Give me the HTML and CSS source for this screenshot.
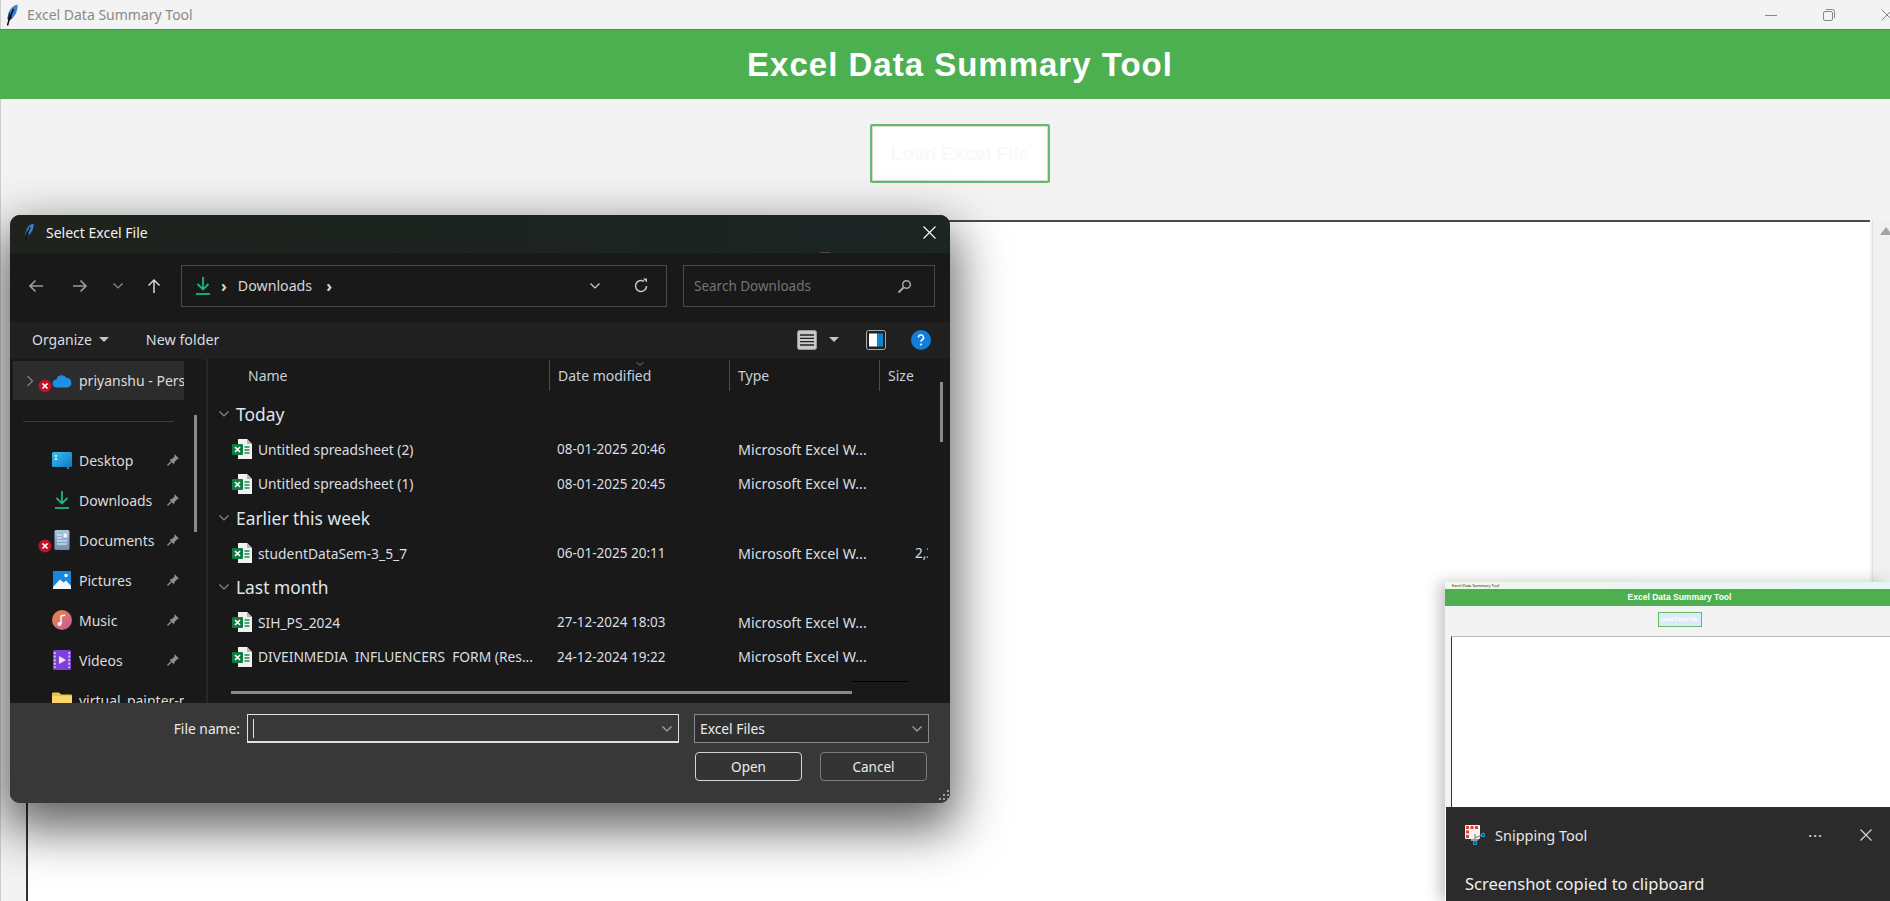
FILE: index.html
```html
<!doctype html>
<html>
<head>
  <meta charset="utf-8">
  <title>Excel Data Summary Tool</title>
  <link rel="stylesheet" href="styles.css">
</head>
<body>

  <svg class="sprite" aria-hidden="true">
    <defs>
      <linearGradient id="g-desktop" x1="0" y1="0" x2="1" y2="1"><stop offset="0" stop-color="#36c5ec"/><stop offset="1" stop-color="#1173c9"/></linearGradient>
      <linearGradient id="g-music" x1="0" y1="0" x2="1" y2="1"><stop offset="0" stop-color="#f0883e"/><stop offset="1" stop-color="#c4589e"/></linearGradient>
      <linearGradient id="g-doc" x1="0" y1="0" x2="0" y2="1"><stop offset="0" stop-color="#a9c4dd"/><stop offset="1" stop-color="#6d8fb3"/></linearGradient>
    </defs>
    <symbol id="feather" viewBox="0 0 12 22">
      <path d="M11.500 0.500C5 2 1.500 8 1.500 15l2 1.500C9 13 12 7 11.500 0.500z" fill="#3f7fd0"/>
      <path d="M1.500 15l2 1.500L6 14 3.500 8z" fill="#1d2c45"/>
      <path d="M7.500 5L3 16l-1.500 5.500" fill="none" stroke="#0c0c0c" stroke-width="1.500"/>
    </symbol>
    <symbol id="xlsx" viewBox="0 0 20 20">
      <path d="M6 0h9l5 5v15H6z" fill="#f1f1f1"/>
      <path d="M15 0v5h5z" fill="#b5b5b5"/>
      <path d="M12.500 8h5M12.500 11h5M12.500 14h5" stroke="#1e8a52" stroke-width="1.500"/>
      <rect x="0" y="5" width="11" height="11" rx="1" fill="#107c41"/>
      <path d="M3 8l5 5M8 8l-5 5" stroke="#fff" stroke-width="1.600"/>
    </symbol>
    <symbol id="pin" viewBox="0 0 14 14">
      <path d="M8.500 1l4.500 4.500-1.800.8-2.700 2.700-.5 2.500L3.500 6.500 6 6l2.700-2.700z" fill="#8e8e8e"/>
      <path d="M5.500 8.500L1.500 12.500" stroke="#8e8e8e" stroke-width="1.500"/>
    </symbol>
    <symbol id="download" viewBox="0 0 16 20">
      <path d="M8 1v12M2.500 8L8 13.500 13.500 8" fill="none" stroke="#1cb48a" stroke-width="1.800"/>
      <path d="M1 18h14" stroke="#1cb48a" stroke-width="1.800"/>
    </symbol>
    <symbol id="badge" viewBox="0 0 14 14">
      <circle cx="7" cy="7" r="6.500" fill="#c4102a"/>
      <path d="M4.500 4.500l5 5M9.500 4.500l-5 5" stroke="#fff" stroke-width="1.700"/>
    </symbol>
    <symbol id="chev-down" viewBox="0 0 12 8">
      <path d="M1.500 1.500L6 6l4.500-4.500" fill="none" stroke="currentColor" stroke-width="1.200"/>
    </symbol>
  </svg>

  <div class="app">
    <div class="titlebar">
      <svg class="title-feather"><use href="#feather"/></svg>
      <span class="title-text">Excel Data Summary Tool</span>
      <div class="win-controls">
        <svg width="12" height="12" viewBox="0 0 12 12"><path d="M0 6.500h12" stroke="#888" stroke-width="1"/></svg>
        <svg width="12" height="12" viewBox="0 0 12 12"><rect x="0.500" y="2.500" width="9" height="9" rx="1.500" fill="none" stroke="#888"/><path d="M3 .5h6.500a2 2 0 0 1 2 2V9" fill="none" stroke="#888"/></svg>
        <svg width="12" height="12" viewBox="0 0 12 12"><path d="M0.500 .5l11 11M11.500 .5l-11 11" stroke="#888"/></svg>
      </div>
    </div>
    <header class="app-header"><h1>Excel Data Summary Tool</h1></header>
    <div class="load-row"><button class="load-btn">Load Excel File</button></div>
    <div class="canvas-row">
      <div class="canvas"></div>
      <div class="vscroll"><svg width="12" height="8" viewBox="0 0 12 8"><path d="M6 0l6 8H0z" fill="#a3a3a3"/></svg></div>
    </div>
  </div>

  <section class="dialog">
    <div class="dlg-title">
      <svg class="dlg-feather"><use href="#feather"/></svg>
      <span>Select Excel File</span>
      <svg class="dlg-close" width="13" height="13" viewBox="0 0 13 13"><path d="M.5.5l12 12M12.500.5l-12 12" stroke="#fff" stroke-width="1.100"/></svg>
    </div>

    <div class="dlg-nav">
      <button class="nav-btn nav-back"><svg width="16" height="14" viewBox="0 0 16 14"><path d="M15 7H2M7.500 1.500L2 7l5.500 5.500" fill="none" stroke="#9a9a9a" stroke-width="1.700"/></svg></button>
      <button class="nav-btn nav-back"><svg width="16" height="14" viewBox="0 0 16 14"><path d="M1 7h13M8.500 1.500L14 7l-5.500 5.500" fill="none" stroke="#9a9a9a" stroke-width="1.700"/></svg></button>
      <button class="nav-btn nav-recent"><svg class="chev-gray" width="12" height="8"><use href="#chev-down"/></svg></button>
      <button class="nav-btn nav-up"><svg width="14" height="16" viewBox="0 0 14 16"><path d="M7 15V2M1.500 7.500L7 2l5.500 5.500" fill="none" stroke="#d4d4d4" stroke-width="1.500"/></svg></button>
      <div class="address">
        <svg class="addr-icon" width="16" height="20"><use href="#download"/></svg>
        <span class="crumb-sep">›</span>
        <span class="crumb">Downloads</span>
        <span class="crumb-sep">›</span>
        <svg class="addr-down" width="12" height="8"><use href="#chev-down"/></svg>
        <svg class="addr-refresh" width="16" height="16" viewBox="0 0 16 16"><path d="M13.500 8A5.500 5.500 0 1 1 11 3.400" fill="none" stroke="#c8c8c8" stroke-width="1.500"/><path d="M10 .5h4v4z" fill="#c8c8c8"/></svg>
      </div>
      <div class="search">
        <span>Search Downloads</span>
        <svg width="15" height="15" viewBox="0 0 15 15"><circle cx="9.500" cy="5.500" r="3.800" fill="none" stroke="#a8a8a8" stroke-width="1.500"/><path d="M6.500 8.500L1.500 13.500" stroke="#a8a8a8" stroke-width="2"/></svg>
      </div>
    </div>

    <div class="dlg-toolbar">
      <span class="tool-organize">Organize</span>
      <i class="caret"></i>
      <span class="tool-folder">New folder</span>
      <svg class="tool-view" width="20" height="20" viewBox="0 0 20 20"><rect x=".5" y=".5" width="19" height="19" rx="2" fill="#c9c9c9" stroke="#9a9a9a"/><path d="M3 5h14M3 8.300h14M3 11.600h14M3 15h14" stroke="#222" stroke-width="1.300"/></svg>
      <i class="caret caret-view"></i>
      <svg class="tool-pane" width="20" height="20" viewBox="0 0 20 20"><rect x=".5" y=".5" width="19" height="19" rx="2" fill="#222" stroke="#aaa"/><rect x="3" y="3.500" width="8" height="13" fill="#fff"/><rect x="11" y="3.500" width="6" height="13" fill="#0f83d6"/></svg>
      <svg class="tool-help" width="20" height="20" viewBox="0 0 20 20"><circle cx="10" cy="10" r="10" fill="#0f7fdc"/><path d="M7.500 7.500a2.500 2.500 0 1 1 3.700 2.200c-.8.500-1.200 1-1.200 2" fill="none" stroke="#fff" stroke-width="1.600"/><circle cx="10" cy="14.500" r="1.100" fill="#fff"/></svg>
    </div>

    <div class="dlg-body">
      <aside class="side">
        <div class="side-current">
          <svg class="chev-right" width="8" height="12" viewBox="0 0 8 12"><path d="M1.500 1l5 5-5 5" fill="none" stroke="#808080" stroke-width="1.300"/></svg>
          <svg class="cloud" width="20" height="14" viewBox="0 0 20 14"><path d="M5 13.500a4 4 0 0 1-.6-8A5.500 5.500 0 0 1 14.600 4 4.800 4.800 0 0 1 15.500 13.500z" fill="#1f8fe6"/></svg>
          <span class="side-label">priyanshu - Personal</span>
          <svg class="badge badge-cloud" width="14" height="14"><use href="#badge"/></svg>
        </div>
        <div class="side-sep"></div>
        <div class="side-item">
          <svg width="20" height="20" viewBox="0 0 20 20"><rect y="2" width="20" height="15" rx="1.500" fill="url(#g-desktop)"/><path d="M3 6h2M3 9h2" stroke="#fff" stroke-width="1.500"/><path d="M15 18h2" stroke="#8fd0ee"/></svg>
          <span class="side-label">Desktop</span>
          <svg class="pin" width="14" height="14"><use href="#pin"/></svg>
        </div>
        <div class="side-item">
          <svg width="20" height="20" viewBox="-2 0 20 20"><use href="#download" width="16" height="20"/></svg>
          <span class="side-label">Downloads</span>
          <svg class="pin" width="14" height="14"><use href="#pin"/></svg>
        </div>
        <div class="side-item">
          <svg width="20" height="20" viewBox="0 0 20 20"><rect x="2.500" width="15" height="20" rx="1.500" fill="url(#g-doc)"/><path d="M5 5h5M5 8h5M5 11h10M5 14h10" stroke="#f0f5fa" stroke-width="1.200"/><rect x="11.500" y="3.500" width="3.500" height="4" fill="#f0f5fa"/></svg>
          <span class="side-label">Documents</span>
          <svg class="pin" width="14" height="14"><use href="#pin"/></svg>
          <svg class="badge badge-docs" width="14" height="14"><use href="#badge"/></svg>
        </div>
        <div class="side-item">
          <svg width="20" height="20" viewBox="0 0 20 20"><rect x="1" y="1" width="18" height="18" rx="1" fill="#1787e0"/><path d="M1 17l7-7.500 3.500 3L14 10.500l5 5.500v3H1z" fill="#f4f8fc"/><circle cx="14" cy="5.500" r="1.700" fill="#fff"/></svg>
          <span class="side-label">Pictures</span>
          <svg class="pin" width="14" height="14"><use href="#pin"/></svg>
        </div>
        <div class="side-item">
          <svg width="20" height="20" viewBox="0 0 20 20"><circle cx="10" cy="10" r="10" fill="url(#g-music)"/><path d="M9 14V6l4-1" fill="none" stroke="#fff" stroke-width="1.500"/><circle cx="7.500" cy="14" r="2" fill="#fff"/></svg>
          <span class="side-label">Music</span>
          <svg class="pin" width="14" height="14"><use href="#pin"/></svg>
        </div>
        <div class="side-item">
          <svg width="20" height="20" viewBox="0 0 20 20"><rect width="18" height="20" x="1" rx="1.500" fill="#7d3fd6"/><path d="M2.800 2v16M17.200 2v16" stroke="#d9c4f7" stroke-width="1.800" stroke-dasharray="2 1.600"/><path d="M7 6l7 4-7 4z" fill="#ece0fb"/></svg>
          <span class="side-label">Videos</span>
          <svg class="pin" width="14" height="14"><use href="#pin"/></svg>
        </div>
        <div class="side-item">
          <svg width="20" height="20" viewBox="0 0 20 20"><path d="M0 3.500A1 1 0 0 1 1 2.500h6l2 2h10a1 1 0 0 1 1 1V17H0z" fill="#f0c14b"/><path d="M0 6h20v11H0z" fill="#fcd86a"/></svg>
          <span class="side-label">virtual_painter-main</span>
        </div>
        <div class="side-scroll"></div>
      </aside>

      <div class="files">
        <div class="files-head">
          <span class="col-name">Name</span>
          <span class="col">Date modified<svg class="sort" width="10" height="6"><use href="#chev-down"/></svg></span>
          <span class="col">Type</span>
          <span class="col">Size</span>
        </div>
        <div class="file-rows">
          <div class="group"><svg width="12" height="8"><use href="#chev-down"/></svg>Today</div>
          <div class="file">
            <svg width="20" height="20"><use href="#xlsx"/></svg>
            <span>Untitled spreadsheet (2)</span><span>08-01-2025 20:46</span><span>Microsoft Excel W...</span><span></span>
          </div>
          <div class="file">
            <svg width="20" height="20"><use href="#xlsx"/></svg>
            <span>Untitled spreadsheet (1)</span><span>08-01-2025 20:45</span><span>Microsoft Excel W...</span><span></span>
          </div>
          <div class="group"><svg width="12" height="8"><use href="#chev-down"/></svg>Earlier this week</div>
          <div class="file">
            <svg width="20" height="20"><use href="#xlsx"/></svg>
            <span>studentDataSem-3_5_7</span><span>06-01-2025 20:11</span><span>Microsoft Excel W...</span><span>2,371 KB</span>
          </div>
          <div class="group"><svg width="12" height="8"><use href="#chev-down"/></svg>Last month</div>
          <div class="file">
            <svg width="20" height="20"><use href="#xlsx"/></svg>
            <span>SIH_PS_2024</span><span>27-12-2024 18:03</span><span>Microsoft Excel W...</span><span>17 KB</span>
          </div>
          <div class="file">
            <svg width="20" height="20"><use href="#xlsx"/></svg>
            <span>DIVEINMEDIA&nbsp; INFLUENCERS&nbsp; FORM (Res...</span><span>24-12-2024 19:22</span><span>Microsoft Excel W...</span><span></span>
          </div>
        </div>
        <div class="list-vbar"></div>
        <div class="list-hbar"></div>
        <div class="list-mark"></div>
      </div>
    </div>

    <div class="dlg-bottom">
      <div class="bottom-row">
        <label class="name-label">File name:</label>
        <div class="name-input"><i class="cursor"></i><svg width="12" height="8"><use href="#chev-down"/></svg></div>
        <div class="type-select"><span>Excel Files</span><svg width="12" height="8"><use href="#chev-down"/></svg></div>
      </div>
      <div class="bottom-actions">
        <button class="dlg-btn dlg-btn-default">Open</button>
        <button class="dlg-btn">Cancel</button>
      </div>
      <svg class="grip" width="10" height="10" viewBox="0 0 10 10"><path d="M8 0h2v2H8zM8 4h2v2H8zM4 4h2v2H4zM8 8h2v2H8zM4 8h2v2H4zM0 8h2v2H0z" fill="#a0a0a0"/></svg>
    </div>
  </section>

  <aside class="snip">
    <div class="thumb">
      <div class="thumb-title">Excel Data Summary Tool</div>
      <div class="thumb-header">Excel Data Summary Tool</div>
      <div class="thumb-load"><span class="thumb-btn">Load Excel File</span></div>
      <div class="thumb-canvas"></div>
    </div>
    <div class="toast">
      <div class="toast-head">
        <svg width="20" height="20" viewBox="0 0 20 20"><rect width="15" height="14" rx="1" fill="#f2f2f2"/><path d="M1 1h3v3H1zM5.500 1h3v3h-3zM10 1h3v3h-3zM1 5.500h3v3H1zM1 10h3v3H1z" fill="#e0451f"/><path d="M6 14h8l-2 2H6z" fill="#9aa5ad"/><circle cx="18" cy="10" r="1.600" fill="none" stroke="#1b9be0" stroke-width="1.300"/><circle cx="10" cy="18" r="1.600" fill="none" stroke="#1b9be0" stroke-width="1.300"/><path d="M10 9l0 7M10 13l7-3" stroke="#7f8c95" stroke-width="1.200"/></svg>
        <span class="toast-app">Snipping Tool</span>
        <span class="toast-more">···</span>
        <svg width="12" height="12" viewBox="0 0 12 12"><path d="M.5.5l11 11M11.500.5l-11 11" stroke="#d8d8d8" stroke-width="1.100"/></svg>
      </div>
      <div class="toast-msg">Screenshot copied to clipboard</div>
    </div>
  </aside>

</body>
</html>
```

FILE: styles.css
```css
* {
  box-sizing: border-box;
}
html, body {
  margin: 0;
  height: 901px;
  overflow: hidden;
}
body {
  position: relative;
  font-family: "Noto Sans", sans-serif;
  background: #f3f3f3;
}
button {
  font-family: inherit;
  padding: 0;
  background: none;
  border: none;
}
.sprite {
  position: absolute;
  width: 0;
  height: 0;
}

/* main window */
.app {
  height: 901px;
  display: flex;
  flex-direction: column;
  border-left: 1px solid #cfcfcf;
}
.titlebar {
  height: 29px;
  flex: none;
  display: flex;
  align-items: center;
  padding-left: 5px;
  font-size: 14px;
  color: #8a8a8a;
  background: #f3f3f3;
}
.title-feather {
  width: 12px;
  height: 22px;
  margin-right: 9px;
}
.win-controls {
  margin-left: auto;
  margin-right: -3px;
  display: flex;
  gap: 46px;
}
.app-header {
  height: 70px;
  flex: none;
  display: flex;
  align-items: center;
  justify-content: center;
  padding-left: 30px;
  background: #4caf50;
  border-top: 1px solid #46944a;
  margin-left: -1px;
}
.app-header h1 {
  margin: 0;
  font-family: "Liberation Sans", Arial, sans-serif;
  font-size: 33px;
  font-weight: bold;
  letter-spacing: 1px;
  color: #fff;
}
.load-row {
  height: 121px;
  flex: none;
  display: flex;
  justify-content: center;
  padding: 25px 0 0 29px;
}
.load-btn {
  width: 180px;
  height: 59px;
  border: 2px solid #66bb6a;
  border-radius: 2px;
  background: #fff;
  box-shadow: inset 0 0 0 1px #d8d8d8;
  color: #f9f9f9;
  font-family: "Liberation Sans", Arial, sans-serif;
  font-size: 19px;
  font-weight: bold;
}
.canvas-row {
  flex: 1;
  display: flex;
  padding-left: 25px;
}
.canvas {
  flex: 1;
  background: #fff;
  border-left: 2px solid #333;
  border-top: 2px solid #4a4a4a;
}
.vscroll {
  width: 18px;
  flex: none;
  margin-left: 2px;
  padding: 7px 0 0 7px;
  background: #f0f0f0;
  overflow: hidden;
  border-left: 1px solid #e2e2e2;
}
.vscroll svg {
  display: block;
}

/* file dialog */
.dialog {
  position: absolute;
  left: 10px;
  top: 215px;
  width: 940px;
  height: 588px;
  display: flex;
  flex-direction: column;
  border-radius: 10px;
  overflow: hidden;
  background: #191919;
  color: #e4e4e4;
  font-size: 14px;
  box-shadow: 0 20px 50px 6px rgba(0,0,0,0.62);
}
.dlg-title {
  position: relative;
  height: 38px;
  flex: none;
  display: flex;
  align-items: center;
  padding: 0 14px 4px 14px;
  background: linear-gradient(90deg, #1f221d, #1b2523);
  color: #f2f2f2;
}
.dlg-title::after {
  content: "";
  position: absolute;
  left: 810px;
  bottom: 0;
  width: 10px;
  height: 1px;
  background: #4a4a4a;
}
.dlg-feather {
  width: 10px;
  height: 18px;
  margin-right: 12px;
}
.dlg-close {
  margin-left: auto;
}
.dlg-nav {
  height: 69px;
  flex: none;
  display: flex;
  align-items: flex-start;
  padding: 12px 0 0 4px;
}
.nav-btn {
  height: 42px;
  display: flex;
  align-items: center;
  justify-content: center;
}
.nav-back {
  width: 44px;
}
.nav-recent {
  width: 32px;
}
.nav-up {
  width: 40px;
  margin-right: 7px;
}
.chev-gray {
  color: #8f8f8f;
}
.address {
  width: 486px;
  height: 42px;
  display: flex;
  align-items: center;
  padding-left: 13px;
  border: 1px solid #4a4a4a;
  font-size: 14.200px;
  color: #d6d6d6;
}
.crumb {
  margin: 0 4px 0 11px;
  padding-bottom: 1px;
}
.crumb-sep {
  margin-left: 10px;
  font-size: 16px;
  font-weight: bold;
  line-height: 1;
}
.addr-down {
  margin-left: auto;
  color: #cfcfcf;
}
.addr-refresh {
  margin: 0 17px 0 32px;
}
.search {
  width: 252px;
  height: 42px;
  margin-left: 16px;
  display: flex;
  align-items: center;
  justify-content: space-between;
  padding: 0 22px 0 10px;
  border: 1px solid #4a4a4a;
  font-size: 13.500px;
  color: #747474;
}
.dlg-toolbar {
  height: 37px;
  flex: none;
  display: flex;
  align-items: center;
  padding: 0 0 2px 22px;
  background: #202020;
  font-size: 14px;
  color: #d5dde6;
}
.caret {
  width: 0;
  height: 0;
  margin-left: 7px;
  border: 5px solid transparent;
  border-top: 5px solid #c4c4c4;
  border-bottom: 0;
}
.tool-folder {
  margin-left: 37px;
  font-size: 14.300px;
}
.tool-view {
  margin-left: auto;
}
.caret-view {
  margin-left: 12px;
}
.tool-pane {
  margin-left: 27px;
}
.tool-help {
  margin: 0 19px 0 25px;
}
.dlg-body {
  flex: 1;
  display: flex;
  min-height: 0;
}
.side {
  position: relative;
  width: 198px;
  flex: none;
  padding-top: 2px;
  border-right: 2px solid #272727;
  overflow: hidden;
  font-size: 14px;
  color: #dcdcdc;
}
.side-current {
  position: relative;
  width: 171px;
  height: 39px;
  margin-left: 3px;
  display: flex;
  align-items: center;
  padding-left: 13px;
  background: #2c2c2c;
  overflow: hidden;
  white-space: nowrap;
}
.chev-right {
  flex: none;
  margin-right: 18px;
}
.cloud {
  flex: none;
  margin-right: 7px;
}
.badge {
  position: absolute;
}
.badge-cloud {
  left: 25px;
  top: 18px;
}
.side-sep {
  height: 1px;
  width: 151px;
  margin: 21px 0 18px 13px;
  background: #3a3a3a;
}
.side-item {
  position: relative;
  width: 174px;
  height: 40px;
  display: flex;
  align-items: center;
  gap: 7px;
  padding: 0 4px 0 42px;
  overflow: hidden;
  white-space: nowrap;
}
.side-item > svg:first-child {
  flex: none;
}
.side-label {
  flex: 1;
}
.pin {
  flex: none;
}
.badge-docs {
  left: 28px;
  top: 19px;
}
.side-scroll {
  position: absolute;
  left: 184px;
  top: 56px;
  width: 3px;
  height: 117px;
  background: #8a8a8a;
}
.files {
  position: relative;
  flex: 1;
  overflow: hidden;
}
.files-head {
  height: 33px;
  width: 720px;
  display: grid;
  grid-template-columns: 341px 180px 150px 1fr;
  align-items: center;
  font-size: 14px;
  color: #c6d0da;
}
.col-name {
  padding-left: 40px;
}
.col {
  position: relative;
  height: 31px;
  display: flex;
  align-items: center;
  padding-left: 8px;
  border-left: 1px solid #4c4c4c;
}
.sort {
  position: absolute;
  left: 85px;
  top: 1px;
  color: #8a8a8a;
}
.file-rows {
  width: 720px;
  padding-top: 5px;
}
.group {
  height: 34.600px;
  display: flex;
  align-items: center;
  gap: 6px;
  padding-left: 10px;
  font-size: 17.400px;
  color: #dfe6ec;
}
.group svg {
  color: #8a8a8a;
}
.file {
  height: 34.600px;
  display: grid;
  grid-template-columns: 26px 299px 181px 177px 55px;
  align-items: center;
  padding: 1px 0 0 24px;
  font-size: 13.500px;
  color: #d9dee3;
  white-space: nowrap;
  overflow: hidden;
}
.file span:nth-of-type(1) {
  font-size: 13.800px;
}
.file span:nth-of-type(3) {
  font-size: 14.300px;
}
.file span:nth-of-type(4) {
  text-align: right;
}
.list-vbar {
  position: absolute;
  left: 732px;
  top: 23px;
  width: 3px;
  height: 60px;
  background: #8a8a8a;
}
.list-hbar {
  position: absolute;
  left: 23px;
  top: 332px;
  width: 621px;
  height: 3px;
  background: #8a8a8a;
}
.list-mark {
  position: absolute;
  left: 644px;
  top: 322px;
  width: 56px;
  height: 1px;
  background: #000;
}
.dlg-bottom {
  position: relative;
  height: 100px;
  flex: none;
  padding: 11px 0 0 0;
  background: #383838;
  font-size: 13.800px;
  color: #ececec;
}
.bottom-row {
  display: flex;
  align-items: center;
  justify-content: flex-end;
  padding-right: 21px;
}
.name-label {
  margin-right: 7px;
}
.name-input, .type-select {
  height: 29px;
  display: flex;
  align-items: center;
  justify-content: space-between;
  padding: 0 5px 0 5px;
  background: #383838;
}
.name-input {
  width: 432px;
  border: 1px solid #e0e0e0;
  box-shadow: inset 0 -1px 0 #e0e0e0;
  margin-right: 15px;
}
.name-input svg, .type-select svg {
  color: #a8a8a8;
}
.cursor {
  width: 1px;
  height: 19px;
  background: #e0e0e0;
}
.type-select {
  width: 235px;
  border: 1px solid #8a8a8a;
  background: #2f2f2f;
}
.bottom-actions {
  margin-top: 9px;
  display: flex;
  justify-content: flex-end;
  gap: 18px;
  padding-right: 23px;
}
.dlg-btn {
  width: 107px;
  height: 29px;
  border: 1px solid #7c7c7c;
  border-radius: 4px;
  background: #343434;
  color: #ececec;
  font-size: 13.500px;
}
.dlg-btn-default {
  border-color: #d4d4d4;
}
.grip {
  position: absolute;
  right: 1px;
  bottom: 3px;
}

/* snipping tool notification */
.snip {
  position: absolute;
  left: 1445px;
  top: 582px;
  right: 0;
  bottom: 0;
  display: flex;
  flex-direction: column;
  box-shadow: -6px 0 14px rgba(0,0,0,0.22);
}
.thumb {
  flex: 1;
  display: flex;
  flex-direction: column;
  background: #f3f3f3;
}
.thumb-title {
  height: 7px;
  flex: none;
  padding-left: 7px;
  font-size: 4px;
  line-height: 7px;
  color: #222;
  background: linear-gradient(90deg, #eef8ea, #e5f6f4);
}
.thumb-header {
  height: 17px;
  flex: none;
  padding-left: 24px;
  text-align: center;
  font-family: "Liberation Sans", Arial, sans-serif;
  font-size: 8.500px;
  font-weight: bold;
  line-height: 17px;
  color: #fff;
  background: #4caf50;
}
.thumb-load {
  height: 30px;
  flex: none;
  display: flex;
  justify-content: center;
  padding: 6px 0 0 24px;
}
.thumb-btn {
  width: 44px;
  height: 15px;
  border: 1px solid #66bb6a;
  background: #dcebfc;
  text-align: center;
  font-size: 5px;
  line-height: 13px;
  color: #fff;
  font-weight: bold;
}
.thumb-canvas {
  flex: 1;
  margin-left: 6px;
  background: #fff;
  border-left: 1px solid #333;
  border-top: 1px solid #bdbdbd;
}
.toast {
  height: 94px;
  flex: none;
  margin-left: 1px;
  padding: 18px 0 0 19px;
  background: #2b2b2b;
  color: #f0f0f0;
}
.toast-head {
  height: 20px;
  display: flex;
  align-items: center;
  font-size: 14.500px;
  color: #e6e6e6;
}
.toast-app {
  margin-left: 10px;
}
.toast-more {
  margin-left: auto;
  margin-right: 37px;
  letter-spacing: 1px;
}
.toast-head svg:last-child {
  margin-right: 18px;
}
.toast-msg {
  margin-top: 27px;
  font-size: 16.500px;
}
```
